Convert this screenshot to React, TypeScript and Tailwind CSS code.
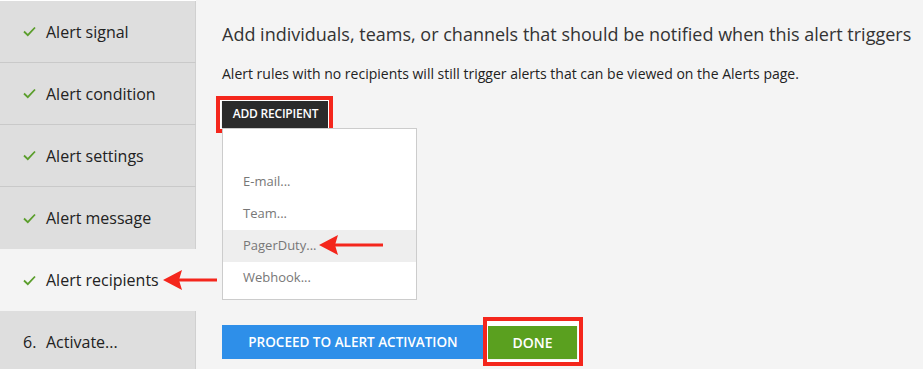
import React from "react";

const RED = "#f4261c";

function Check() {
  return (
    <svg width="13" height="11" viewBox="0 0 13 11" className="shrink-0">
      <path d="M1 5.5 L4.8 9.2 L12 1.5" fill="none" stroke="#5b9e2c" strokeWidth="1.8" />
    </svg>
  );
}

function Arrow({ width }: { width: number }) {
  return (
    <svg width={width} height="22" viewBox={`0 0 ${width} 22`}>
      <polygon points={`0,11 19,1 16,11 19,21`} fill={RED} />
      <rect x="15" y="9.5" width={width - 15} height="3" fill={RED} />
    </svg>
  );
}

const steps = [
  { label: "Alert signal", done: true },
  { label: "Alert condition", done: true },
  { label: "Alert settings", done: true },
  { label: "Alert message", done: true },
  { label: "Alert recipients", done: true, active: true },
  { label: "Activate...", num: "6." },
];

export default function App() {
  return (
    <div
      className="flex w-[923px] h-[369px] overflow-hidden bg-[#f4f4f4] text-[#222]"
      style={{ fontFamily: '"Open Sans", "Noto Sans", sans-serif' }}
    >
      <div className="w-[196px] shrink-0 flex flex-col border-t border-t-white">
        {steps.map((s, i) => (
          <div
            key={i}
            className={`relative h-[62px] shrink-0 flex items-center pl-[23px] ${
              s.active
                ? "bg-[#f4f4f4]"
                : "bg-[#dedede] border-r border-r-[#d0d0d0]"
            } ${i < steps.length - 1 && !s.active && !steps[i + 1]?.active ? "border-b border-b-[#c9c9c9]" : ""}`}
          >
            {s.done ? (
              <Check />
            ) : (
              <span className="text-[16px] w-[13px]">{s.num}</span>
            )}
            <span className="ml-[10px] text-[16px] leading-none">{s.label}</span>
            {s.active && (
              <div className="absolute left-[163px] top-[20px]">
                <Arrow width={54} />
              </div>
            )}
          </div>
        ))}
      </div>
      <div className="flex-1 pl-[26px] pt-[22px] flex flex-col items-start">
        <h1 className="text-[18px] leading-[24px] text-[#333] font-normal whitespace-nowrap">
          Add individuals, teams, or channels that should be notified when this alert triggers
        </h1>
        <p className="mt-[18px] text-[14px] leading-[20px] text-[#222] whitespace-nowrap">
          Alert rules with no recipients will still trigger alerts that can be viewed on the Alerts page.
        </p>
        <div className="relative mt-[15px]">
          <button className="h-[29px] w-[107px] bg-[#2b2b2b] text-white text-[12px] font-semibold tracking-[-0.2px]">
            ADD RECIPIENT
          </button>
          <div
            className="absolute left-[-6px] top-[-3px] w-[117px] h-[37px] border-[4px] pointer-events-none"
            style={{ borderColor: RED }}
          >
            <div className="absolute inset-0 border border-white" />
          </div>
        </div>
        <div className="relative w-[195px] h-[172px] bg-white border border-[#cccccc] py-[5px] text-[13px] text-[#777]">
          <div className="h-[32px]" />
          <div className="h-[32px] flex items-center pl-[20px]">E-mail...</div>
          <div className="h-[32px] flex items-center pl-[20px]">Team...</div>
          <div className="h-[32px] flex items-center pl-[20px] bg-[#eeeeee]">PagerDuty...</div>
          <div className="h-[32px] flex items-center pl-[20px]">Webhook...</div>
          <div className="absolute left-[96px] top-[105px]">
            <Arrow width={64} />
          </div>
        </div>
        <div className="mt-[25px] flex items-center gap-[4px]">
          <button className="h-[34px] w-[262px] bg-[#2e8fe9] text-white text-[13.5px] font-semibold">
            PROCEED TO ALERT ACTIVATION
          </button>
          <div className="relative">
            <button className="h-[33px] w-[89px] bg-[#5aa01f] text-white text-[14px] font-semibold">
              DONE
            </button>
            <div
              className="absolute left-[-5px] top-[-9px] w-[100px] h-[49px] border-[4px] pointer-events-none"
              style={{ borderColor: RED }}
            >
              <div className="absolute inset-0 border-white border-x-[1px] border-y-[4px] border-t-[5px] border-b-[2px]" />
            </div>
          </div>
        </div>
      </div>
    </div>
  );
}
